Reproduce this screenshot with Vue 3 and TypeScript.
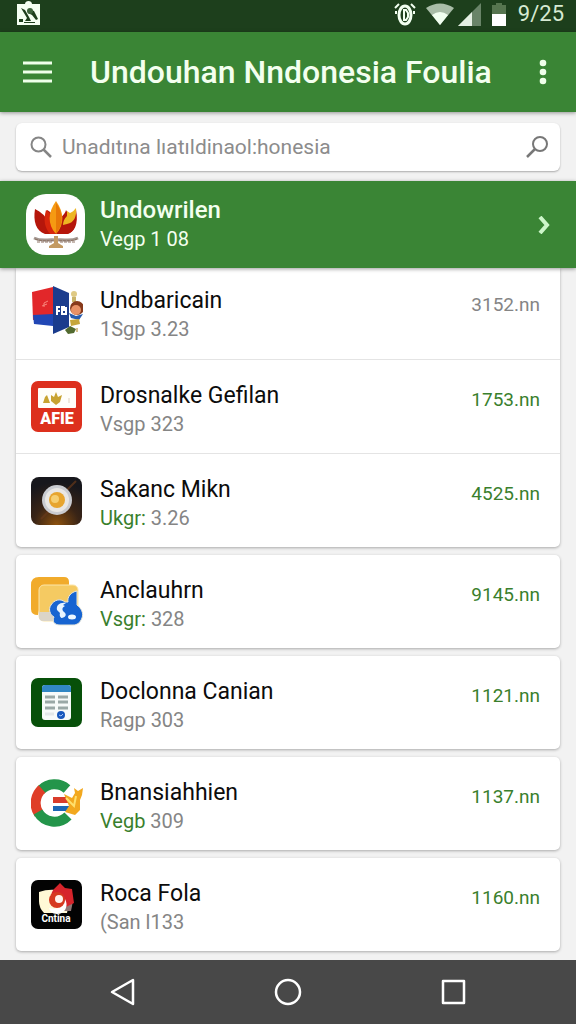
<script setup lang="ts">
type IconName = 'book' | 'red' | 'plate' | 'folder' | 'doc' | 'ring' | 'camera'

interface Entry {
  icon: IconName
  name: string
  tag: string
  version: string
  amount: string
  tagGreen: boolean
  amountGreen: boolean
}

const groups: Entry[][] = [
  [
    { icon: 'book', name: 'Undbaricain', tag: '1Sgp', version: '3.23', amount: '3152.nn', tagGreen: false, amountGreen: false },
    { icon: 'red', name: 'Drosnalke Gefilan', tag: 'Vsgp', version: '323', amount: '1753.nn', tagGreen: false, amountGreen: true },
    { icon: 'plate', name: 'Sakanc Mikn', tag: 'Ukgr:', version: '3.26', amount: '4525.nn', tagGreen: true, amountGreen: true },
  ],
  [{ icon: 'folder', name: 'Anclauhrn', tag: 'Vsgr:', version: '328', amount: '9145.nn', tagGreen: true, amountGreen: true }],
  [{ icon: 'doc', name: 'Doclonna Canian', tag: 'Ragp', version: '303', amount: '1121.nn', tagGreen: false, amountGreen: true }],
  [{ icon: 'ring', name: 'Bnansiahhien', tag: 'Vegb', version: '309', amount: '1137.nn', tagGreen: true, amountGreen: true }],
  [{ icon: 'camera', name: 'Roca Fola', tag: '(San', version: 'l133', amount: '1160.nn', tagGreen: false, amountGreen: true }],
]
</script>

<template>
  <div class="page">
    <div class="status">
      <svg class="notif" width="24" height="26" viewBox="0 0 24 26" aria-hidden="true">
        <path fill="#f4fff2" d="M1 4h8c0-4 7-4 7 0h8v21H1z" />
        <path fill="#1d3f1c" d="M5 8l4 2 4 7 2 4H9l2-3-3-5zM13 9l5 2 4 8-2 1-4-5-4-2zM3 19h4v3H3zM8 22h11v1H8z" />
        <circle cx="14" cy="11" r="3" fill="#3c633a" />
      </svg>
      <div class="status-right">
        <svg class="alarm" width="22" height="24" viewBox="0 0 22 24" fill="none" stroke="#f1fff0" aria-hidden="true">
          <ellipse cx="11" cy="13" rx="6" ry="9" stroke-width="3" />
          <path stroke-width="2" d="M5 2L1 6m16-4 4 4M2 9v3m18-3v3" />
          <path stroke-width="2" d="M10 8v10M9 8h3l2 3v4l-2 3H9" />
        </svg>
        <svg width="28" height="22" viewBox="0 0 28 22" aria-hidden="true">
          <path fill="#a9bda8" d="M0 5Q14-4 28 5L14 22z" />
          <path fill="#f1fff0" d="M6 12Q14 6 22 12L14 22z" />
        </svg>
        <svg width="23" height="23" viewBox="0 0 23 23" aria-hidden="true">
          <path fill="#698468" d="M23 0v23H0z" />
          <path fill="#e4efe3" d="M14 9v14H0z" />
        </svg>
        <svg class="battery" width="16" height="23" viewBox="0 0 16 23" aria-hidden="true">
          <path fill="#56754f" d="M1 2h4V0h6v2h4v10H1z" />
          <path fill="#fff" d="M1 11h14v12H1z" />
        </svg>
        <span class="clock">9/25</span>
      </div>
    </div>

    <header class="bar">
      <button class="plain" type="button" aria-label="Menu">
        <svg width="30" height="22" viewBox="0 0 30 22" stroke="#efffea" stroke-width="3" aria-hidden="true">
          <path d="M1 2h29M1 11h29M1 20h29" />
        </svg>
      </button>
      <h1>Undouhan Nndonesia Foulia</h1>
      <button class="plain more" type="button" aria-label="More">
        <svg width="8" height="26" viewBox="0 0 8 26" fill="#efffea" aria-hidden="true">
          <circle cx="4" cy="4" r="3.3" /><circle cx="4" cy="13" r="3.3" /><circle cx="4" cy="22" r="3.3" />
        </svg>
      </button>
    </header>

    <form class="search" role="search" @submit.prevent>
      <svg width="22" height="22" viewBox="0 0 22 22" fill="none" stroke="#858585" stroke-width="2" aria-hidden="true">
        <circle cx="8.500" cy="8.500" r="7" /><path stroke-width="2.500" d="M13.500 13.500L21 21" />
      </svg>
      <input type="search" aria-label="Search" placeholder="Unadıtına lıatıldinaol:honesia" />
      <button class="plain" type="submit" aria-label="Submit search">
        <svg width="22" height="22" viewBox="0 0 22 22" fill="none" stroke="#777" stroke-width="2" aria-hidden="true">
          <circle cx="14" cy="8" r="7" /><path stroke-width="2.500" d="M9 13L1 21" />
        </svg>
      </button>
    </form>

    <a class="banner" href="#">
      <span class="logo">
        <svg width="46" height="48" viewBox="0 0 46 48" aria-hidden="true">
          <path fill="#b5160b" d="M2 8c6 3 9 6 12 10V9c5 2 8 8 9 14 4-7 9-9 10-14 2 3 3 6 2 9 4-3 5-5 8-9 3 14-2 23-9 24H12C3 30 0 20 2 8z" />
          <path fill="#d8260c" d="M13 9c6 4 9 10 9 24h-5c-5-6-7-13-4-24z" />
          <path fill="#f59a12" d="M23 0c8 11 9 23 0 33-9-10-8-22 0-33z" />
          <path fill="#e87908" d="M23 2v31c7-9 8-20 0-31z" />
          <path fill="#eeb622" d="M43 7c1 8-2 15-9 16l-4 1c0-3 1-6 4-9v-5l3 2c3-1 4-3 6-5z" />
          <path fill="#b5160b" d="M43 18c0 9-4 14-9 15h-9c3-4 4-8 6-9 5 1 9-2 12-6z" />
          <path fill="none" stroke="#a39790" stroke-width="3" d="M1 37c8 4 13 1 22 2 9-1 14 2 22-2" />
          <path fill="none" stroke="#8d7364" stroke-width="1" stroke-dasharray="3 1" d="M2 38c8 3 13 1 21 2 8-1 13 1 21-2M4 41h15m8 0h15" />
          <path fill="#c39a62" d="M21 35h4v7l5 3v2H16v-2l5-3z" />
        </svg>
      </span>
      <span class="texts">
        <span class="banner-name">Undowrilen</span>
        <span class="sub banner-sub">Vegp 1 08</span>
      </span>
      <svg class="chevron" width="14" height="18" viewBox="0 0 14 18" fill="none" stroke="#cdf6ca" stroke-width="4" aria-hidden="true">
        <path d="M2 1l7 8-7 8" />
      </svg>
    </a>

    <main class="list">
      <ul v-for="(group, g) in groups" :key="g" class="card">
        <li v-for="entry in group" :key="entry.name">
          <a class="row" href="#">
            <svg class="icon" width="52" height="52" viewBox="0 0 52 52" aria-hidden="true">
              <g v-if="entry.icon === 'book'">
                <path fill="#e2272a" d="M1 6l21-5v31L2 34z" />
                <path fill="#2147b5" d="M2 29l20-1v12L3 38z" />
                <path fill="#1b3c8d" d="M22 0l16 7v34L22 48z" />
                <path fill="none" stroke="#f8867b" d="M17 15l-4 2v4m-2-1l5-2" />
                <path fill="none" stroke="#fff" stroke-width="2" d="M26 20v9m0-8h3m-3 4h3M31 20v9m2-9v4h-2m4-3v7h-3" />
                <circle cx="43" cy="8" r="3" fill="#dfca85" />
                <path fill="#c9b46a" d="M41 11h4v5h-4z" />
                <circle cx="46" cy="22" r="7" fill="#873a1b" />
                <circle cx="45" cy="24" r="5" fill="#e89166" />
                <path fill="#285cae" d="M38 27l7 3 7-2-4 6-8-2z" />
                <path fill="#c6a63b" d="M39 34l9-1 1 5-9 2z" />
                <path fill="#526a2f" d="M34 44l5-4 6 3-2 4-6 1z" />
                <path fill="#d8c18d" d="M45 42h2v4h-2z" />
              </g>
              <g v-else-if="entry.icon === 'red'">
                <rect x="0" y="0" width="51" height="51" rx="7" fill="#dd301d" />
                <rect x="7" y="7" width="38" height="20" rx="1" fill="#fffef9" />
                <path fill="#c8a331" d="M12 22l2-6 2-2 3 8zM20 14l3 2 2-5 2 5 4-2-2 7-4 3-5-4z" />
                <path fill="#eee8dc" d="M37 17h2v5h-2z" />
                <text x="26" y="43" class="red-label" text-anchor="middle">AFIE</text>
              </g>
              <g v-else-if="entry.icon === 'plate'">
                <defs>
                  <radialGradient id="table" cx="0.5" cy="1" r="0.9">
                    <stop offset="0" stop-color="#8d510e" /><stop offset="0.5" stop-color="#392416" /><stop offset="1" stop-color="#17171c" />
                  </radialGradient>
                </defs>
                <rect x="0" y="2" width="51" height="48" rx="8" fill="url(#table)" />
                <path stroke="#67391a" stroke-width="2" opacity="0.7" d="M10 44l9-9M36 15l9-9" />
                <circle cx="26" cy="25" r="15" fill="#c9cbd0" />
                <circle cx="26" cy="25" r="12" fill="#e9e7e4" />
                <circle cx="26" cy="25" r="8" fill="#e7a52f" />
                <circle cx="24" cy="24" r="4" fill="#f6cf72" />
              </g>
              <g v-else-if="entry.icon === 'folder'">
                <path fill="#f1ab2b" d="M8 1h25q5 0 5 5v28H8l-1 5q-7 0-7-6V9q0-8 8-8z" />
                <rect x="8" y="9" width="39" height="36" rx="5" fill="#f5ca62" stroke="#fce5a9" />
                <path fill="#dbd5c8" d="M8 36h20v9H12q-4 0-4-4z" />
                <path fill="#fff" d="M38 35h12v14H38z" />
                <path fill="#1764d1" stroke="#e9e7da" stroke-width="1" d="M46 15v14c4 3 7 8 5 13-2 5-5 7-9 7H29c-6 0-8-4-6-8-4-2-6-8-3-12 3-5 9-7 14-3h3c-1-5 3-10 9-11z" />
                <path fill="#e8f4ff" d="M35 27c-6-1-10 2-9 7l3 3c-1 3 1 5 2 5 4-1 5-4 2-6-3-3-1-5 1-6l-2-1z" />
                <ellipse cx="41" cy="41" rx="4" ry="2.500" fill="#eff8ff" />
              </g>
              <g v-else-if="entry.icon === 'doc'">
                <rect x="0" y="1" width="51" height="49" rx="7" fill="#075009" />
                <rect x="11" y="8" width="29" height="35" rx="3" fill="#f7faf9" />
                <path fill="#3287c4" d="M11 15v-4q0-3 3-3h23q3 0 3 3v4z" />
                <path stroke="#9aa8a6" stroke-width="3" d="M14 20h10m3 0h10M14 25h10m3 0h10M14 31h10m3 0h10" />
                <path stroke="#e2e7e8" stroke-width="3" d="M14 37h9" />
                <circle cx="30" cy="38" r="4" fill="#1758bd" />
                <path fill="none" stroke="#a6c7fa" d="M28 38l2 1 2-2" />
              </g>
              <g v-else-if="entry.icon === 'ring'">
                <g fill="none" stroke-width="10">
                  <path stroke="#23954a" d="M10 12A19 19 0 0 1 36 11" />
                  <path stroke="#df3e28" d="M8 36A19 19 0 0 1 11 11" />
                  <path stroke="#23954a" d="M7 34A19 19 0 0 0 37 38" />
                </g>
                <path fill="#d93c2b" d="M22 19h15v6H22z" />
                <path fill="#1c67b5" d="M22 28h16v5H22z" />
                <path fill="#f2a81f" d="M33 16l8 4 3-5-1-5 4 3 5-3-1 7-2 5v10l-5 5-10-3 4-6z" />
                <path fill="none" stroke="#ffe06d" stroke-width="2" d="M35 20l8 8 2-10" />
              </g>
              <g v-else>
                <rect x="0" y="1" width="51" height="49" rx="7" fill="#030303" />
                <path fill="#fff8d6" d="M8 13q8-3 18-2l12 12-2 11H13q-5-5-5-12z" />
                <path fill="#8e7775" d="M36 20l6 2-2 10h-7z" />
                <path fill="#d6242b" d="M23 10l6-6 5 5 7 1 2 14-8 4-12 0c-4-6-4-14 0-18z" />
                <path fill="#fff" d="M34 20c4 7 0 15-8 15-5 0-7-3-8-6 7 2 14 0 16-9z" />
                <circle cx="26" cy="21" r="8" fill="#d63a20" />
                <circle cx="28" cy="20" r="4" fill="#fff4ee" />
                <text x="25" y="43" class="camera-label" text-anchor="middle">Cntina</text>
              </g>
            </svg>
            <span class="texts">
              <span class="name">{{ entry.name }}</span>
              <span class="sub"><span :class="{ green: entry.tagGreen }">{{ entry.tag }}</span> {{ entry.version }}</span>
            </span>
            <span class="amount" :class="{ green: entry.amountGreen }">{{ entry.amount }}</span>
          </a>
        </li>
      </ul>
    </main>

    <nav class="nav" aria-label="System">
      <button class="plain" type="button" aria-label="Back">
        <svg width="28" height="28" viewBox="0 0 28 28" fill="none" stroke="#fff" stroke-width="2.500" stroke-linejoin="round" aria-hidden="true">
          <path d="M25 2v24L4 14z" />
        </svg>
      </button>
      <button class="plain" type="button" aria-label="Home">
        <svg width="28" height="28" viewBox="0 0 28 28" fill="none" stroke="#fff" stroke-width="2.500" aria-hidden="true">
          <circle cx="14" cy="14" r="12" />
        </svg>
      </button>
      <button class="plain" type="button" aria-label="Recent apps">
        <svg width="28" height="28" viewBox="0 0 28 28" fill="none" stroke="#fff" stroke-width="2.500" stroke-linejoin="round" aria-hidden="true">
          <rect x="3" y="3" width="21" height="22" />
        </svg>
      </button>
    </nav>
  </div>
</template>

<style>
body {
  margin: 0;
  background: #f2f2f2;
}
</style>

<style scoped>
.page {
  display: flex;
  flex-direction: column;
  min-height: 100vh;
  background: #f2f2f2;
  font-family: Roboto, "Liberation Sans", sans-serif;
}
.page * {
  box-sizing: border-box;
}
.plain {
  display: flex;
  padding: 0;
  border: 0;
  background: none;
}
.status {
  display: flex;
  justify-content: space-between;
  height: 32px;
  padding: 0 12px 0 16px;
  background: #1d3f1c;
}
.status-right {
  display: flex;
  align-items: center;
  gap: 4px;
  height: 28px;
}
.alarm {
  margin-right: 6px;
}
.battery {
  margin-left: 6px;
}
.clock {
  margin-left: 7px;
  color: #d6ead3;
  font-size: 22px;
  line-height: 28px;
}
.bar {
  display: flex;
  align-items: center;
  height: 80px;
  padding: 0 29px 0 22px;
  background: #3a8535;
  box-shadow: 0 1px 4px rgba(0, 0, 0, 0.4);
}
h1 {
  flex: 1;
  margin: 0 0 0 38px;
  color: #f3ffef;
  font-size: 32px;
  font-weight: 500;
  line-height: 40px;
  white-space: nowrap;
}
.search {
  display: flex;
  align-items: center;
  gap: 10px;
  height: 48px;
  margin: 11px 16px 10px;
  padding: 0 12px 0 14px;
  border-radius: 6px;
  background: #fff;
  box-shadow: 0 1px 2px rgba(0, 0, 0, 0.3);
}
input {
  flex: 1;
  min-width: 0;
  padding: 0;
  border: 0;
  outline: 0;
  background: none;
  color: #555;
  font-family: inherit;
  font-size: 21px;
  line-height: 28px;
}
input::placeholder {
  color: #8c8c8c;
  opacity: 1;
}
.banner {
  position: relative;
  display: flex;
  align-items: center;
  height: 87px;
  padding: 0 24px 0 26px;
  background: #3a8535;
  box-shadow: 0 1px 4px rgba(0, 0, 0, 0.4);
  color: #f3ffef;
  text-decoration: none;
}
.logo {
  display: flex;
  align-items: center;
  justify-content: center;
  width: 59px;
  height: 61px;
  margin-right: 15px;
  border-radius: 20px;
  background: #fff;
}
.texts {
  display: flex;
  flex: 1;
  flex-direction: column;
}
.banner-name {
  font-size: 24px;
  font-weight: 500;
  line-height: 29px;
}
.list {
  display: flex;
  flex: 1;
  flex-direction: column;
  gap: 8px;
  padding: 0 16px 8px;
}
.card {
  margin: 0;
  padding: 0;
  border-radius: 5px;
  background: #fff;
  box-shadow: 0 1px 3px rgba(0, 0, 0, 0.3);
  list-style: none;
}
.card:first-child {
  border-radius: 0 0 5px 5px;
}
.card li + li {
  border-top: 1px solid #e4e4e4;
}
.row {
  display: flex;
  align-items: center;
  height: 93px;
  padding: 6px 20px 0 15px;
  text-decoration: none;
}
.card:first-child li:first-child .row {
  height: 91px;
  padding-top: 2px;
}
.icon {
  margin: 0 17px 6px 0;
}
.name {
  color: #0c0c0c;
  font-size: 23px;
  line-height: 29px;
}
.sub {
  color: #858585;
  font-size: 20px;
  line-height: 28px;
}
.banner-sub {
  color: #f3ffef;
}
.amount {
  padding-bottom: 20px;
  color: #858585;
  font-size: 19px;
  line-height: 28px;
}
.sub .green,
.amount.green {
  color: #3a7f2d;
}
.red-label {
  fill: #fff;
  font-size: 16px;
  font-weight: 900;
}
.camera-label {
  fill: #fff;
  font-size: 10px;
  font-weight: 700;
}
.nav {
  display: flex;
  align-items: center;
  justify-content: center;
  gap: 138px;
  height: 64px;
  background: #484848;
}
</style>
